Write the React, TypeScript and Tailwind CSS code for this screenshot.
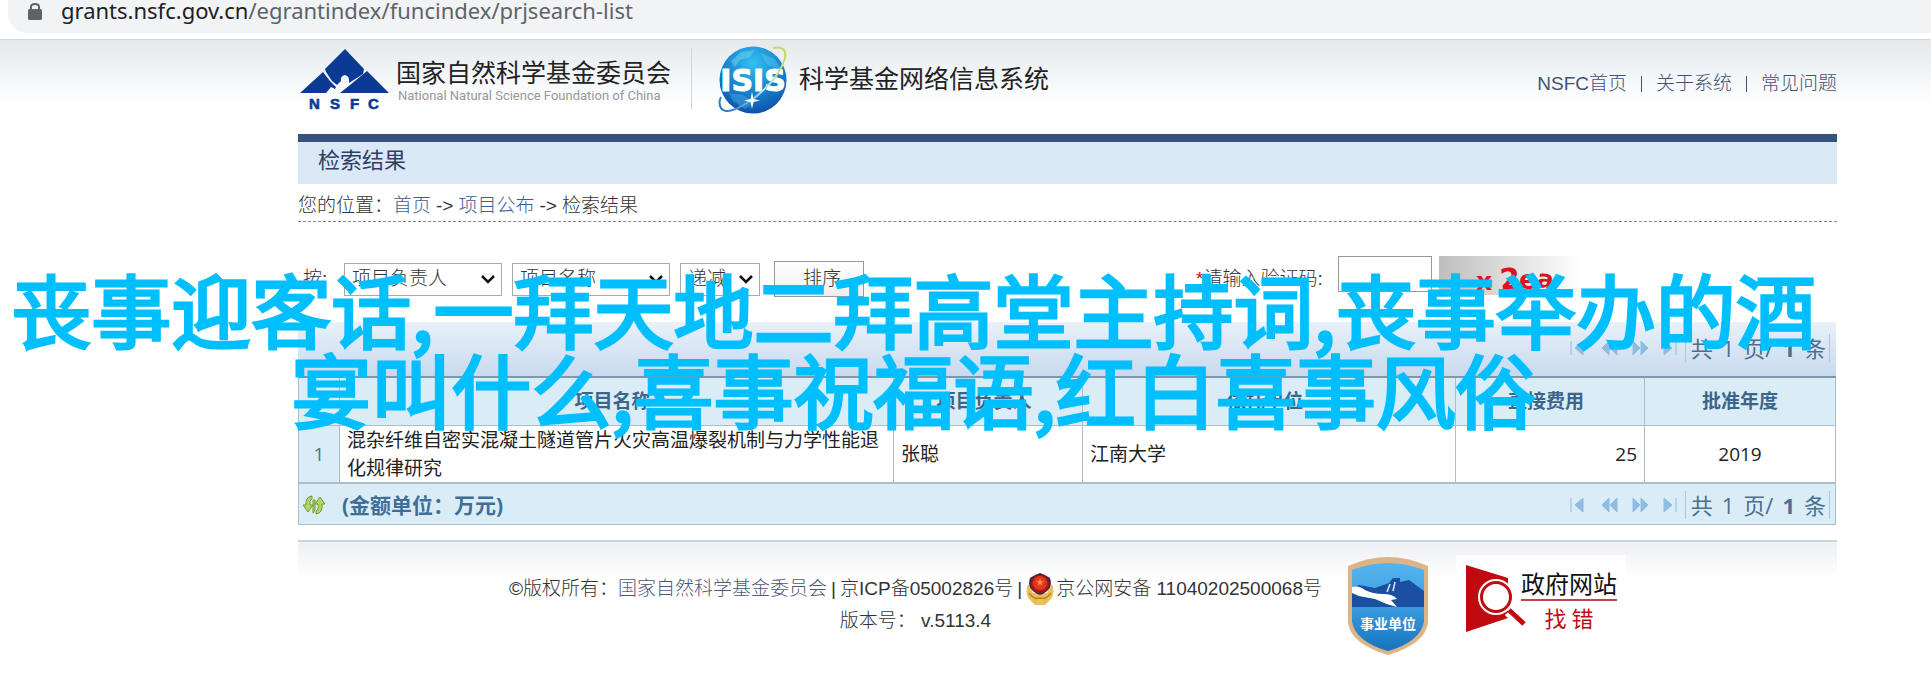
import { ReactNode } from "react";

const navLinks = ["NSFC首页", "关于系统", "常见问题"];

const columns = [
  { title: "", width: "w-[41px]" },
  { title: "项目名称", width: "w-[554px]" },
  { title: "项目负责人", width: "w-[189px]" },
  { title: "依托单位", width: "w-[373px]" },
  { title: "直接费用", width: "w-[189px]" },
  { title: "批准年度", width: "w-[191px]" },
];

const projects = [
  {
    name: "混杂纤维自密实混凝土隧道管片火灾高温爆裂机制与力学性能退化规律研究",
    leader: "张聪",
    unit: "江南大学",
    cost: 25,
    year: 2019,
  },
];

function NsfcLogo() {
  return (
    <svg className="w-[90px] h-[64px]" viewBox="0 0 90 64" role="img" aria-label="NSFC">
      <path
        d="M45 2 L64 22 L63 27 L49 36 Q50 29 45 28 Q40 29 41 34 L37 38 L32 34 L26 25 L25 22 Z"
        fill="#0b3a94"
      />
      <path d="M23 25 L30 34 L36 40 L35 42 L31 40 L26 46 H0 Z" fill="#0b3a94" />
      <path d="M67 24 L89 46 H40 L50 38 Z" fill="#0b3a94" />
      <g
        fill="#0b3a94"
        stroke="#0b3a94"
        strokeWidth="0.6"
        fontFamily="Liberation Sans, sans-serif"
        fontSize="15"
        fontWeight="700"
      >
        <text x="9" y="62">N</text>
        <text x="30" y="62">S</text>
        <text x="50" y="62">F</text>
        <text x="68" y="62">C</text>
      </g>
    </svg>
  );
}

function IsisLogo() {
  return (
    <svg className="w-[72px] h-[72px]" viewBox="0 0 72 72" role="img" aria-label="ISIS">
      <defs>
        <radialGradient id="globe" cx="0.5" cy="0.25" r="0.8">
          <stop offset="0" stopColor="#35c0ee" />
          <stop offset="0.55" stopColor="#1583cf" />
          <stop offset="1" stopColor="#0d4aa5" />
        </radialGradient>
        <linearGradient id="ring" x1="0" y1="1" x2="1" y2="0">
          <stop offset="0" stopColor="#1b6fb5" />
          <stop offset="0.5" stopColor="#b9e3f5" />
          <stop offset="1" stopColor="#c5d94e" />
        </linearGradient>
      </defs>
      <circle cx="36" cy="37" r="33.5" fill="url(#globe)" />
      <path d="M14 18 L24 9 L38 7 L33 14 L23 17 L18 24 Z" fill="#6fd3f2" opacity="0.5" />
      <path d="M44 10 L58 16 L64 26 L50 22 Z" fill="#6fd3f2" opacity="0.35" />
      <path d="M12 50 L26 52 L38 60 L28 66 L16 58 Z" fill="#4aa6e0" opacity="0.5" />
      <text
        x="36"
        y="48"
        fill="#fff"
        stroke="#fff"
        strokeWidth="1"
        textAnchor="middle"
        fontFamily="DejaVu Sans, sans-serif"
        fontSize="30"
        fontWeight="700"
      >
        ISIS
      </text>
      <path
        d="M56 5 Q70 2 68 15 Q62 36 36 56 Q10 74 4 65 Q1 60 4 54"
        fill="none"
        stroke="url(#ring)"
        strokeWidth="2"
      />
      <path d="M35 49 L36.500 56 L43 57.500 L36.500 59 L35 66 L33.500 59 L27 57.500 L33.500 56 Z" fill="#fff" />
    </svg>
  );
}

function PoliceBadge() {
  return (
    <svg className="w-[28px] h-[32px]" viewBox="0 0 28 32" aria-hidden="true">
      <path d="M2 11 Q-2 22 5 28 L9 32 H19 L23 28 Q30 22 26 11 L21 20 H7 Z" fill="#e9bf57" />
      <path d="M3 20 Q8 27 14 25 Q20 27 25 20" fill="none" stroke="#b98325" strokeWidth="1.500" />
      <path d="M14 0 Q20 2 24 5 Q28 17 14 22 Q0 17 4 5 Q8 2 14 0 Z" fill="#4b2340" />
      <circle cx="14" cy="11" r="9" fill="#a81a12" />
      <circle cx="14" cy="10" r="7" fill="#e5341d" />
      <path d="M14 5 L15 8 H18 L15.500 10 L16.500 13 L14 11 L11.500 13 L12.500 10 L10 8 H13 Z" fill="#f6924a" />
    </svg>
  );
}

function InstitutionBadge() {
  return (
    <svg className="w-[82px] h-[100px]" viewBox="0 0 82 100" role="img" aria-label="事业单位">
      <defs>
        <linearGradient id="shield" x1="0" y1="0" x2="0" y2="1">
          <stop offset="0" stopColor="#55b4ee" />
          <stop offset="0.45" stopColor="#3fa0e2" />
          <stop offset="1" stopColor="#1673be" />
        </linearGradient>
      </defs>
      <path
        d="M41 1 Q60 1 81 10 V67 Q78 88 41 99 Q4 88 1 67 V10 Q22 1 41 1 Z"
        fill="#dcb486"
      />
      <path
        d="M41 7 Q59 7 77 14 V66 Q73 86 41 95 Q9 86 5 66 V14 Q23 7 41 7 Z"
        fill="url(#shield)"
      />
      <path d="M5 33 L12 29 L28 32 L42 27 L46 22 H53 V26 L62 24 L77 35 V51 H5 Z" fill="#1c4f9f" />
      <path d="M5 31 Q12 29 18 34 Q26 38 36 38 Q46 38 50 43 L44 44 L50 51 Q38 48 28 43 L12 40 L5 37 Z" fill="#fff" />
      <path d="M43 28 L40 36 M48 26 L46 35" stroke="#d6eafa" strokeWidth="1.500" />
      <text
        x="41"
        y="73"
        fill="#fff"
        textAnchor="middle"
        fontFamily="Noto Sans CJK SC, sans-serif"
        fontSize="14"
        fontWeight="700"
      >
        事业单位
      </text>
    </svg>
  );
}

function FindErrorIcon() {
  return (
    <svg className="w-[62px] h-[70px]" viewBox="0 0 62 70" aria-hidden="true">
      <path d="M1 1 L43 14 V54 L1 68 Z" fill="#c00a0f" />
      <path d="M43 48 L59 63" stroke="#fff" strokeWidth="9" />
      <circle cx="31" cy="33" r="16" fill="#fff" stroke="#fff" strokeWidth="4" />
      <circle cx="31" cy="33" r="14.500" fill="none" stroke="#c00a0f" strokeWidth="3" />
      <path d="M44 46 L59 60" stroke="#c00a0f" strokeWidth="5" />
    </svg>
  );
}

function RefreshIcon() {
  return (
    <svg className="w-[24px] h-[20px]" viewBox="0 0 24 20" aria-hidden="true">
      <g fill="#b5d56b" stroke="#6f9a2c" strokeWidth="1" strokeLinejoin="round">
        <path d="M10 1 Q3 2 4 10 H1 L6 17 L11 10 H8 Q7 5 10 4 Z" />
        <path d="M14 19 Q21 18 20 9 H23 L18 2 L13 9 H16 Q17 15 14 16 Z" />
        <path d="M11 5 H13 V15 L11 18 Z" />
      </g>
    </svg>
  );
}

const pagerIcons = [
  { label: "首页", d: "M1 2 V16 M13 2 L5 9 L13 16 Z" },
  { label: "上一页", d: "M8 2 L1 9 L8 16 Z M16 2 L9 9 L16 16 Z" },
  { label: "下一页", d: "M1 2 L8 9 L1 16 Z M9 2 L16 9 L9 16 Z" },
  { label: "末页", d: "M1 2 L9 9 L1 16 Z M13 2 V16" },
];

function Pager() {
  return (
    <div className="flex items-center text-[22px] leading-7 text-[#4a6f8f]">
      <div className="flex gap-[13px] mr-[4px]">
        {pagerIcons.map((icon) => (
          <button key={icon.label} aria-label={icon.label} className="block">
            <svg className="w-[18px] h-[18px]" viewBox="0 0 18 18" fill="#8fbce0" stroke="#8fbce0">
              <path d={icon.d} />
            </svg>
          </button>
        ))}
      </div>
      <div className="flex gap-[9px] border-x border-[#b9c6cf] pl-[5px] pr-[3px]">
        <span>共</span>
        <span>1</span>
        <span>页/</span>
        <b>1</b>
        <span>条</span>
      </div>
    </div>
  );
}

type SortSelectProps = { id: string; options: string[]; width: string; label?: string };

function SortSelect({ id, options, width, label }: SortSelectProps) {
  return (
    <div className={`relative ${width}`}>
      <select
        id={id}
        aria-label={label}
        className="appearance-none block w-full h-[33px] border border-[#a9a9a9] bg-white pl-[7px] text-[19px] font-light text-[#333]"
      >
        {options.map((option) => (
          <option key={option}>{option}</option>
        ))}
      </select>
      <svg
        className="absolute right-[7px] top-[12px] w-[14px] h-[9px] pointer-events-none"
        viewBox="0 0 14 9"
        fill="none"
        stroke="#111"
        strokeWidth="2.500"
      >
        <path d="M1 1 L7 7 L13 1" />
      </svg>
    </div>
  );
}

function Cell({ children, className = "" }: { children: ReactNode; className?: string }) {
  return <td className={`border border-[#a9bfcc] px-[7px] ${className}`}>{children}</td>;
}

export default function App() {
  return (
    <div className="relative overflow-hidden bg-white pb-6 font-['Liberation_Sans','Noto_Sans_CJK_SC',sans-serif] text-[19px] leading-7 text-[#333]">
      {/* Address bar */}
      <div className="h-[39px] pl-[8px]">
        <div className="flex h-[33px] gap-[19px] rounded-bl-[20px] bg-[#f1f3f4] pl-[20px]">
          <svg className="mt-[3px] w-[14px] h-[17px]" viewBox="0 0 14 17" aria-hidden="true">
            <rect x="0" y="6" width="14" height="11" rx="1.500" fill="#5f6368" />
            <path d="M3 7 V4 Q3 1 7 1 Q11 1 11 4 V7" fill="none" stroke="#5f6368" strokeWidth="2" />
          </svg>
          <p className="font-['Noto_Sans',sans-serif] text-[22px] leading-5 text-[#5f6368]">
            <span className="text-[#202124]">grants.nsfc.gov.cn</span>
            /egrantindex/funcindex/prjsearch-list
          </p>
        </div>
      </div>

      <div className="border-t border-[#d5d8da] bg-[linear-gradient(#e6e9ec,#f3f6f9_35px,#fff_68px)] pl-[298px] pr-[94px]">
        {/* Header */}
        <header className="flex h-[94px] items-start">
          <div className="flex pl-[2px] pt-[7px]">
            <NsfcLogo />
            <div className="pl-[6px] pt-[6px] font-['Noto_Sans_CJK_SC',sans-serif]">
              <p className="text-[25px] leading-[36px] text-[#222]">国家自然科学基金委员会</p>
              <p className="pl-[2px] font-['Roboto',sans-serif] text-[13px] leading-[14px] text-[#999]">
                National Natural Science Foundation of China
              </p>
            </div>
          </div>
          <div className="ml-[20px] mt-[8px] h-[62px] w-px bg-[#d0d4d8]" />
          <div className="ml-[25px] mt-[3px] flex items-center">
            <IsisLogo />
            <p className="ml-[10px] text-[25px] text-[#222]">科学基金网络信息系统</p>
          </div>
          <nav className="ml-auto mt-[30px] flex items-center gap-[14px] font-light text-[#3f5375]">
            {navLinks.map((link, index) => (
              <div key={link} className="flex items-center gap-[14px]">
                {index > 0 && <span className="h-[16px] w-px bg-[#3f5375]" />}
                <a href="#">{link}</a>
              </div>
            ))}
          </nav>
        </header>

        <h1 className="border-t-8 border-[#37527b] bg-[#dbe9f6] pb-[5px] pl-[20px] text-[22px] font-normal leading-[37px] text-[#2f3f63]">
          检索结果
        </h1>

        <div className="flex h-[38px] items-center gap-[5px] border-b border-dashed border-[#888] pt-[7px] font-light">
          <span>
            您的位置：<a href="#" className="text-[#3c5f95]">首页</a>
          </span>
          <span>-&gt;</span>
          <a href="#" className="text-[#3c5f95]">项目公布</a>
          <span>-&gt;</span>
          <span>检索结果</span>
        </div>

        {/* Sort + captcha */}
        <form className="flex h-[100px] items-center pb-[20px] pt-[34px] font-light">
          <label htmlFor="sortField" className="w-[46px] pl-[5px]">按:</label>
          <div className="flex flex-1 items-center gap-[10px]">
            <SortSelect id="sortField" options={["项目负责人"]} width="w-[158px]" />
            <SortSelect id="sortField2" label="排序字段" options={["项目名称"]} width="w-[158px]" />
            <SortSelect id="sortOrder" label="顺序" options={["递减"]} width="w-[80px]" />
            <button
              type="button"
              className="ml-[4px] h-[36px] w-[90px] border border-[#999] bg-linear-to-b from-white to-[#eee] pl-[6px]"
            >
              排序
            </button>
          </div>
          <label htmlFor="captcha" className="w-[142px]">
            <span className="text-red-600">*</span>请输入验证码:
          </label>
          <input
            id="captcha"
            className="-mt-[11px] h-[36px] w-[94px] border border-[#999] bg-white px-2"
          />
          <svg className="-mt-[7px] ml-[7px] w-[142px] h-[39px]" viewBox="0 0 142 39" role="img" aria-label="验证码">
            <defs>
              <linearGradient id="captchaBg" x1="0" y1="0" x2="1" y2="0">
                <stop offset="0" stopColor="#bebebe" />
                <stop offset="1" stopColor="#fff" />
              </linearGradient>
            </defs>
            <rect width="142" height="39" fill="url(#captchaBg)" />
            <g fill="#d8141c" fontFamily="DejaVu Sans, sans-serif" fontWeight="700">
              <text x="37" y="34" fontSize="25">x</text>
              <text x="61" y="33" fontSize="29" transform="rotate(-5 70 25)">2</text>
              <text x="80" y="33" fontSize="26">e</text>
              <text x="98" y="32" fontSize="25" transform="rotate(8 108 25)">a</text>
            </g>
          </svg>
          <div className="w-[256px]" />
        </form>

        {/* Results */}
        <div className="font-['Open_Sans','Noto_Sans_CJK_SC',sans-serif] pr-px">
          <div className="flex h-[54px] items-center justify-end bg-linear-to-b from-[#e9f1fa] to-[#c9d9ee] pb-[3px] pr-[6px]">
            <Pager />
          </div>
          <table className="w-full table-fixed border-collapse border border-[#a9bfcc] border-t-2 border-t-[#7d97ad]">
            <thead>
              <tr className="h-[48px] bg-[#daedf6] text-[#3b658a]">
                {columns.map((col) => (
                  <th
                    key={col.title}
                    className={`border border-[#a9bfcc] border-t-2 border-t-[#7d97ad] pr-2 last:pr-0 ${col.width}`}
                  >
                    {col.title}
                  </th>
                ))}
              </tr>
            </thead>
            <tbody>
              {projects.map((project, index) => (
                <tr key={project.name} className="h-[57px] text-[#222]">
                  <Cell className="bg-[#daedf6] text-center text-[#4a7292]">{index + 1}</Cell>
                  <Cell>{project.name}</Cell>
                  <Cell>{project.leader}</Cell>
                  <Cell>{project.unit}</Cell>
                  <Cell className="text-right">{project.cost}</Cell>
                  <Cell className="text-center">{project.year}</Cell>
                </tr>
              ))}
            </tbody>
          </table>
          <div className="flex h-[43px] items-center border border-t-2 border-[#a9bfcc] bg-[#daedf6] pl-[3px] pr-[5px] pt-[3px] -mt-px">
            <RefreshIcon />
            <p className="ml-[16px] flex-1 text-[21px] font-bold text-[#3f6f99]">(金额单位：万元)</p>
            <Pager />
          </div>
        </div>

        {/* Footer */}
        <footer className="mt-[15px] flex justify-center border-t-2 border-[#ccd5dc] bg-[linear-gradient(#eceff4,#fff_36px)]">
          <div className="mt-[31px] text-center font-light leading-8">
            <div className="flex items-center gap-[4px]">
              <span>
                ©版权所有：<a href="#" className="text-[#4d5a78]">国家自然科学基金委员会</a>
              </span>
              <span>|</span>
              <a href="#">京ICP备05002826号</a>
              <span>|</span>
              <a href="#" className="flex items-center">
                <PoliceBadge />
                <span className="ml-[2px]">京公网安备 11040202500068号</span>
              </a>
            </div>
            <p>版本号： v.5113.4</p>
          </div>
          <a href="#" className="ml-[25px] mt-[14px]">
            <InstitutionBadge />
          </a>
          <a href="#" className="ml-[27px] mt-[13px] flex bg-white pb-2 pl-[9px] pr-[9px] pt-[9px]">
            <FindErrorIcon />
            <div className="-ml-[6px] text-center font-['Noto_Sans_CJK_SC',sans-serif] text-[24px]">
              <p className="mt-[5px] border-b-2 border-[#c8414b] pb-[2px] text-[#111]">政府网站</p>
              <p className="mt-[2px] text-[22px] text-[#c00a1a]">找 错</p>
            </div>
          </a>
        </footer>
      </div>

      {/* Caption across the page */}
      <div className="pointer-events-none absolute left-0 right-[104px] top-[267px] whitespace-nowrap text-center font-['Noto_Sans_CJK_SC',sans-serif] text-[80px] leading-[80px] text-[#00bfff] [-webkit-text-stroke:3px_#00bfff]">
        <p>丧事迎客话,一拜天地二拜高堂主持词,丧事举办的酒</p>
        <p>宴叫什么,喜事祝福语,红白喜事风俗</p>
      </div>
    </div>
  );
}
